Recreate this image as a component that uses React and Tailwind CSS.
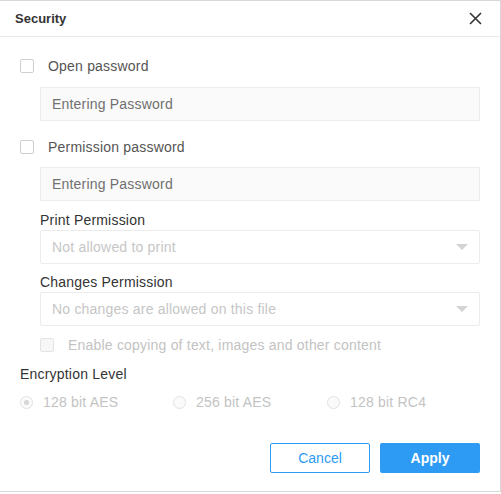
import React, { useState } from "react";

const Checkbox = ({ disabled }) => (
  <span
    className={`block w-[14px] h-[14px] rounded-[2px] border ${
      disabled ? "border-[#e4e4e4] bg-[#f7f7f7]" : "border-[#cfcfcf] bg-white"
    }`}
  />
);

const Radio = ({ checked, label }) => (
  <div className="flex items-center h-[20px]">
    <span className="w-[13px] h-[13px] rounded-full border border-[#e2e2e2] bg-[#fafafa] flex items-center justify-center">
      {checked && <span className="w-[5px] h-[5px] rounded-full bg-[#d5d5d5]" />}
    </span>
    <span className="ml-[10px] text-[14px] tracking-[0.2px] text-[#c3c3c3]">{label}</span>
  </div>
);

const Select = ({ value }) => (
  <div className="ml-[40px] w-[440px] h-[34px] border border-[#ececec] rounded-[2px] bg-white flex items-center justify-between pl-[11px] pr-[11px]">
    <span className="text-[14px] tracking-[0.2px] text-[#c6c6c6]">{value}</span>
    <svg width="12" height="7" viewBox="0 0 12 7">
      <path d="M0 0 L12 0 L6 6 Z" fill="#d3d3d3" />
    </svg>
  </div>
);

const App = () => {
  const [openPwd, setOpenPwd] = useState("");
  const [permPwd, setPermPwd] = useState("");

  return (
    <div
      className="w-[501px] h-[494px] bg-white"
      style={{ fontFamily: '"Liberation Sans", Arial, sans-serif' }}
    >
      <div className="w-[501px] h-[492px] border-t border-r border-b border-[#d8d8d8] flex flex-col">
        <div className="h-[36px] border-b border-[#e8e8e8] flex items-center justify-between pl-[15px] pr-[18px] shrink-0">
          <span className="text-[13px] font-bold text-[#333]">Security</span>
          <svg width="13" height="13" viewBox="0 0 13 13">
            <path d="M1 1 L12 12 M12 1 L1 12" stroke="#333" strokeWidth="1.6" />
          </svg>
        </div>

        <div className="flex items-center h-[20px] mt-[19px] pl-[20px]">
          <Checkbox />
          <span className="ml-[14px] text-[14px] tracking-[0.2px] text-[#555]">Open password</span>
        </div>
        <input
          value={openPwd}
          onChange={(e) => setOpenPwd(e.target.value)}
          placeholder="Entering Password"
          className="ml-[40px] mt-[11px] w-[440px] h-[34px] border border-[#ececec] bg-[#fafafa] px-[11px] text-[14px] tracking-[0.2px] text-[#555] placeholder:text-[#707070] outline-none"
        />

        <div className="flex items-center h-[20px] mt-[16px] pl-[20px]">
          <Checkbox />
          <span className="ml-[14px] text-[14px] tracking-[0.2px] text-[#555]">Permission password</span>
        </div>
        <input
          value={permPwd}
          onChange={(e) => setPermPwd(e.target.value)}
          placeholder="Entering Password"
          className="ml-[40px] mt-[10px] w-[440px] h-[34px] border border-[#ececec] bg-[#fafafa] px-[11px] text-[14px] tracking-[0.2px] text-[#555] placeholder:text-[#707070] outline-none"
        />

        <div className="ml-[40px] mt-[9px] h-[20px] flex items-center text-[14px] tracking-[0.2px] text-[#333]">
          Print Permission
        </div>
        <Select value="Not allowed to print" />

        <div className="ml-[40px] mt-[8px] h-[20px] flex items-center text-[14px] tracking-[0.2px] text-[#333]">
          Changes Permission
        </div>
        <Select value="No changes are allowed on this file" />

        <div className="flex items-center h-[20px] mt-[9px] pl-[40px]">
          <Checkbox disabled />
          <span className="ml-[14px] text-[14px] tracking-[0.2px] text-[#c3c3c3]">
            Enable copying of text, images and other content
          </span>
        </div>

        <div className="ml-[20px] mt-[9px] h-[20px] flex items-center text-[14px] tracking-[0.2px] text-[#333]">
          Encryption Level
        </div>
        <div className="flex mt-[8px] pl-[20px]">
          <div className="w-[153px]">
            <Radio checked label="128 bit AES" />
          </div>
          <div className="w-[154px]">
            <Radio label="256 bit AES" />
          </div>
          <Radio label="128 bit RC4" />
        </div>

        <div className="flex justify-end gap-[10px] mt-[31px] pr-[20px]">
          <button className="w-[100px] h-[30px] border border-[#2d9bf3] rounded-[2px] bg-white text-[14px] text-[#2d9bf3]">
            Cancel
          </button>
          <button className="w-[100px] h-[30px] rounded-[2px] bg-[#2d9bf3] text-[14px] font-bold text-white">
            Apply
          </button>
        </div>
      </div>
    </div>
  );
};

export default App;
